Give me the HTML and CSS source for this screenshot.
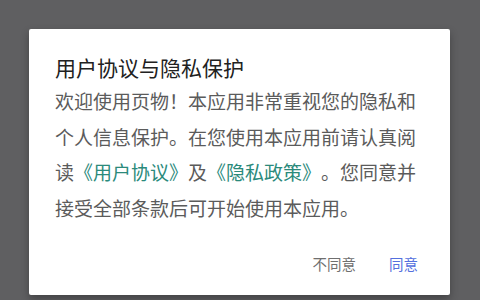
FILE: index.html
```html
<!DOCTYPE html>
<html lang="zh">
<head>
  <meta charset="UTF-8">
  <meta name="viewport" content="width=device-width, initial-scale=1.0">
  <title>用户协议与隐私保护</title>
  <link rel="stylesheet" href="styles.css">
</head>
<body>

<div class="dialog">
  <h3 class="title">用户协议与隐私保护</h3>
  <p class="message">欢迎使用页物！本应用非常重视您的隐私和个人信息保护。在您使用本应用前请认真阅读<a href="#">《用户协议》</a>及<a href="#">《隐私政策》</a>。您同意并接受全部条款后可开始使用本应用。</p>
  <div class="actions">
    <button class="disagree">不同意</button>
    <button class="agree">同意</button>
  </div>
</div>

</body>
</html>
```

FILE: styles.css
```css
* {
  margin: 0;
  padding: 0;
  box-sizing: border-box;
}
body {
  font-family: "Noto Sans CJK SC", "Noto Sans", sans-serif;
  background-color: #5f5f61;
  height: 300px;
  overflow: hidden;
  padding: 29px 0 0 29px;
}
.dialog {
  width: 421px;
  height: 266px;
  background-color: #fff;
  border-radius: 2px;
  box-shadow: 0 4px 8px rgba(0, 0, 0, 0.3);
  padding: 20px 26px 0 26px;
  display: flex;
  flex-direction: column;
  text-spacing-trim: space-all;
}
.title {
  font-size: 21px;
  font-weight: normal;
  color: #212121;
  line-height: 36px;
}
.message {
  font-size: 19px;
  color: #5b5b5b;
  line-height: 35.5px;
  margin-top: -2px;
}
.message a {
  color: #2b8a7b;
  text-decoration: none;
}
.actions {
  display: flex;
  justify-content: flex-end;
  gap: 33px;
  margin-top: 29px;
  padding-right: 6px;
}
.actions button {
  background: none;
  border: none;
  font-family: inherit;
  font-size: 14.5px;
  line-height: 20px;
  cursor: pointer;
}
.disagree {
  color: #6f6f6f;
}
.agree {
  color: #5470de;
}
```
